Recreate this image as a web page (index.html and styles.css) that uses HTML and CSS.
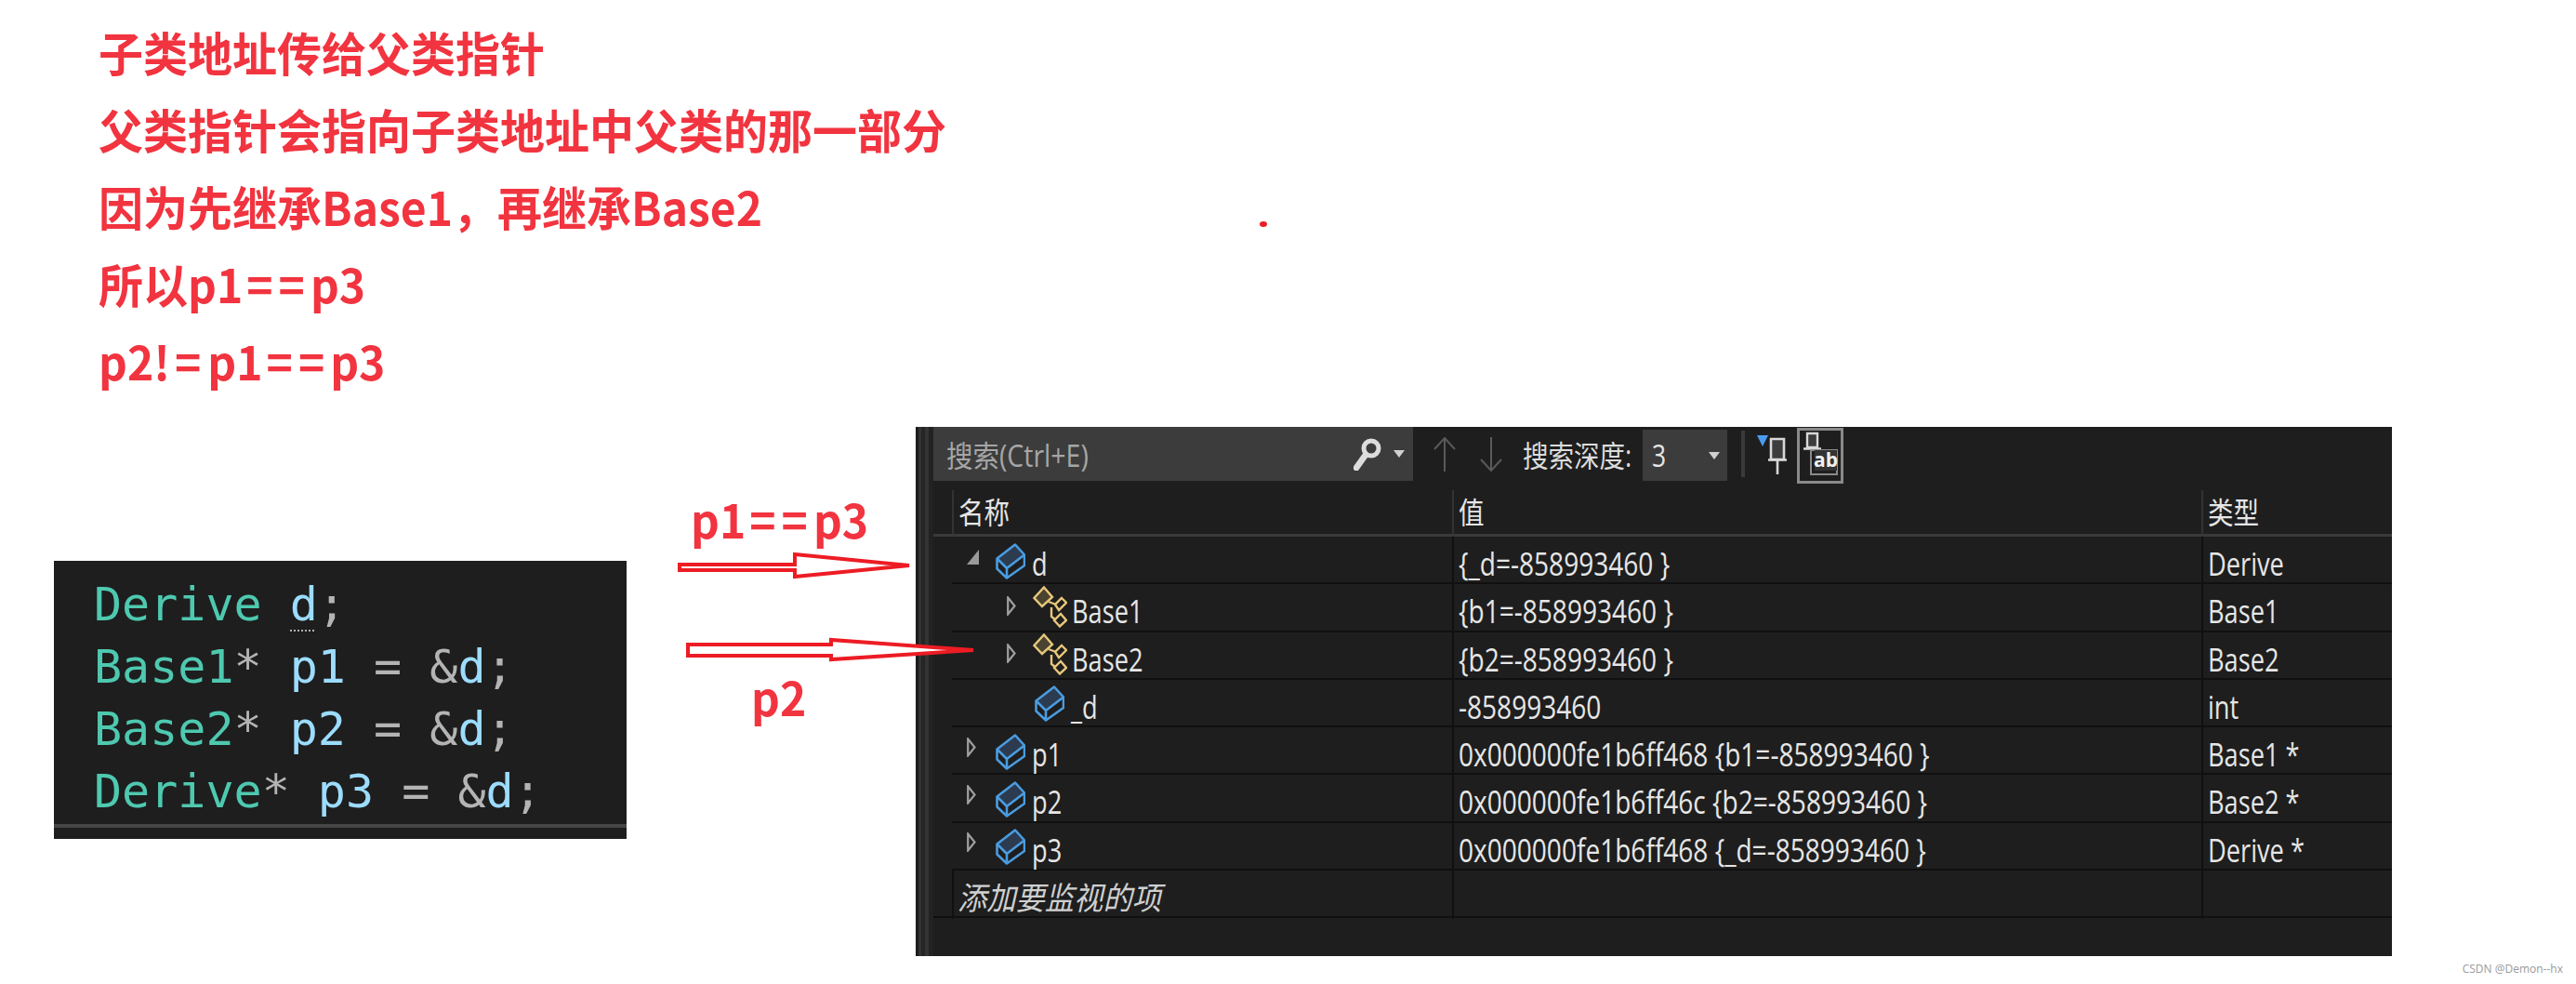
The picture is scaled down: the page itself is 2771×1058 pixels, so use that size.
FILE: index.html
```html
<!DOCTYPE html>
<html lang="zh-CN">
<head>
    <meta charset="UTF-8">
    <meta name="viewport" content="width=device-width, initial-scale=1.0">
    <title>子类地址传给父类指针</title>
    <link rel="stylesheet" href="styles.css">
</head>
<body>
    <svg class="defs" width="0" height="0">
        <symbol id="box" viewBox="0 0 32 39">
            <path d="M21 1.5 L31 12.5 L12 27 L1.5 16.5 Z" fill="#2c3b50"/>
            <path d="M21 1.5 L31 12.5 V24 L12 37.5 L1.5 27.5 V16.5 Z M1.5 16.5 L12 27 L31 12.5 M12 27 V37.5" fill="none" stroke="#4a9ce0" stroke-width="2.6" stroke-linejoin="round"/>
        </symbol>
        <symbol id="base" viewBox="0 0 37 45">
            <path d="M17 17 L25 20 M20 23 V33 L24 36" fill="none" stroke="#e8c77b" stroke-width="2.4"/>
            <path d="M12 1.5 L21 12 L10 22 L1.5 13 Z" fill="#49432f" stroke="#e8c77b" stroke-width="2.4"/>
            <path d="M31 13 L36 18 L28 26 L24 20 Z" fill="#1e1e1e" stroke="#e8c77b" stroke-width="2.4"/>
            <path d="M30 30 L36 37 L29 43.5 L23 37 Z" fill="#1e1e1e" stroke="#e8c77b" stroke-width="2.4"/>
        </symbol>
        <symbol id="closed" viewBox="0 0 10 21">
            <path d="M1.2 1.5 L8.5 10.5 L1.2 19.5 Z" fill="none" stroke="#a0a0a0" stroke-width="2.2"/>
        </symbol>
        <symbol id="open" viewBox="0 0 13 16">
            <path d="M13 0 V16 H0 Z" fill="#9a9a9a"/>
        </symbol>
    </svg>

    <div class="notes">
        <p>子类地址传给父类指针</p>
        <p>父类指针会指向子类地址中父类的那一部分</p>
        <p>因为先继承Base1，再继承Base2</p>
        <p>所以p1<span class="eq">==</span>p3</p>
        <p>p2!<span class="eq eq-wide">=</span>p1<span class="eq">==</span>p3</p>
    </div>
    <div class="dot"></div>

    <div class="lower">
        <div class="code">
            <div class="code-line"><span class="type">Derive</span> <span class="var dotted">d</span><span class="op">;</span></div>
            <div class="code-line"><span class="type">Base1</span><span class="op">*</span> <span class="var">p1</span> <span class="op">=</span> <span class="op">&amp;</span><span class="var">d</span><span class="op">;</span></div>
            <div class="code-line"><span class="type">Base2</span><span class="op">*</span> <span class="var">p2</span> <span class="op">=</span> <span class="op">&amp;</span><span class="var">d</span><span class="op">;</span></div>
            <div class="code-line"><span class="type">Derive</span><span class="op">*</span> <span class="var">p3</span> <span class="op">=</span> <span class="op">&amp;</span><span class="var">d</span><span class="op">;</span></div>
            <div class="code-rule"></div>
        </div>

        <div class="marks">
            <div class="mark mark-one">p1<span class="eq">==</span>p3</div>
            <div class="mark mark-two">p2</div>
        </div>

        <div class="panel">
            <div class="gutter"></div>
            <div class="watch">
                <div class="toolbar">
                    <div class="search">
                        <span class="squeeze">搜索(Ctrl+E)</span>
                        <svg class="search-icon" width="30" height="35" viewBox="0 0 30 35">
                            <circle cx="19" cy="11" r="8" fill="none" stroke="#dcdcdc" stroke-width="5"/>
                            <path d="M13 18 L3 32" stroke="#dcdcdc" stroke-width="6.5" stroke-linecap="round"/>
                        </svg>
                        <span class="caret caret-search"></span>
                    </div>
                    <svg class="step step-up" width="24" height="37" viewBox="0 0 24 37">
                        <path d="M12 37 V1 M1 13 L12 1 L23 13" fill="none" stroke="#5a5a5a" stroke-width="2"/>
                    </svg>
                    <svg class="step step-down" width="24" height="37" viewBox="0 0 24 37">
                        <path d="M12 0 V36 M1 24 L12 36 L23 24" fill="none" stroke="#5a5a5a" stroke-width="2"/>
                    </svg>
                    <span class="depth-label"><span class="squeeze">搜索深度:</span></span>
                    <div class="depth">
                        <span class="squeeze">3</span>
                        <span class="caret caret-depth"></span>
                    </div>
                    <div class="tool-sep"></div>
                    <svg class="pin" width="34" height="44" viewBox="0 0 34 44">
                        <path d="M0 2 H12 L6 14 Z" fill="#4a9cf0"/>
                        <path d="M15 6 H29 V28 H15 Z" fill="#3c3c3c" stroke="#d8d8d8" stroke-width="2.6"/>
                        <path d="M12 28.5 H32 M22 28 V44" stroke="#d8d8d8" stroke-width="2.6"/>
                    </svg>
                    <div class="toggle">
                        <svg width="44" height="54" viewBox="0 0 44 54">
                            <path d="M8 3 H19 V18 H8 Z" fill="#3c3c3c" stroke="#d8d8d8" stroke-width="2.4"/>
                            <path d="M4 19.5 H23 M13 19 V32" stroke="#d8d8d8" stroke-width="2.4"/>
                            <path d="M12 21 H40 V47 H12 Z" fill="#1e1e1e" stroke="#8a8a8a" stroke-width="2"/>
                            <rect x="16" y="21" width="24" height="22" fill="#333333"/>
                            <text class="ab" x="28" y="39" text-anchor="middle">ab</text>
                        </svg>
                    </div>
                </div>

                <div class="head">
                    <div class="head-cell"><span class="squeeze">名称</span></div>
                    <div class="head-cell"><span class="squeeze">值</span></div>
                    <div class="head-cell"><span class="squeeze">类型</span></div>
                </div>

                <div class="rows">
                    <div class="row">
                        <div class="cell name lvl0">
                            <svg class="exp exp-open" width="13" height="16"><use href="#open"/></svg>
                            <svg class="ico" width="32" height="39"><use href="#box"/></svg>
                            <span class="squeeze">d</span>
                        </div>
                        <div class="cell value"><span class="squeeze">{_d=-858993460 }</span></div>
                        <div class="cell"><span class="squeeze">Derive</span></div>
                    </div>
                    <div class="row">
                        <div class="cell name lvl1">
                            <svg class="exp exp-closed" width="10" height="21"><use href="#closed"/></svg>
                            <svg class="ico-base" width="37" height="45"><use href="#base"/></svg>
                            <span class="squeeze">Base1</span>
                        </div>
                        <div class="cell value"><span class="squeeze">{b1=-858993460 }</span></div>
                        <div class="cell"><span class="squeeze">Base1</span></div>
                    </div>
                    <div class="row">
                        <div class="cell name lvl1">
                            <svg class="exp exp-closed" width="10" height="21"><use href="#closed"/></svg>
                            <svg class="ico-base" width="37" height="45"><use href="#base"/></svg>
                            <span class="squeeze">Base2</span>
                        </div>
                        <div class="cell value"><span class="squeeze">{b2=-858993460 }</span></div>
                        <div class="cell"><span class="squeeze">Base2</span></div>
                    </div>
                    <div class="row">
                        <div class="cell name lvl2">
                            <svg class="ico" width="32" height="39"><use href="#box"/></svg>
                            <span class="squeeze">_d</span>
                        </div>
                        <div class="cell value"><span class="squeeze">-858993460</span></div>
                        <div class="cell"><span class="squeeze">int</span></div>
                    </div>
                    <div class="row">
                        <div class="cell name lvl0">
                            <svg class="exp exp-top" width="10" height="21"><use href="#closed"/></svg>
                            <svg class="ico" width="32" height="39"><use href="#box"/></svg>
                            <span class="squeeze">p1</span>
                        </div>
                        <div class="cell value"><span class="squeeze">0x000000fe1b6ff468 {b1=-858993460 }</span></div>
                        <div class="cell"><span class="squeeze">Base1 *</span></div>
                    </div>
                    <div class="row">
                        <div class="cell name lvl0">
                            <svg class="exp exp-top" width="10" height="21"><use href="#closed"/></svg>
                            <svg class="ico" width="32" height="39"><use href="#box"/></svg>
                            <span class="squeeze">p2</span>
                        </div>
                        <div class="cell value"><span class="squeeze">0x000000fe1b6ff46c {b2=-858993460 }</span></div>
                        <div class="cell"><span class="squeeze">Base2 *</span></div>
                    </div>
                    <div class="row">
                        <div class="cell name lvl0">
                            <svg class="exp exp-top" width="10" height="21"><use href="#closed"/></svg>
                            <svg class="ico" width="32" height="39"><use href="#box"/></svg>
                            <span class="squeeze">p3</span>
                        </div>
                        <div class="cell value"><span class="squeeze">0x000000fe1b6ff468 {_d=-858993460 }</span></div>
                        <div class="cell"><span class="squeeze">Derive *</span></div>
                    </div>
                    <div class="row row-add">
                        <div class="cell add"><span class="squeeze">添加要监视的项</span></div>
                        <div class="cell"></div>
                        <div class="cell"></div>
                    </div>
                </div>
            </div>
        </div>
    </div>

    <!-- arrows drawn over the panel edge -->
    <svg class="arrows" width="340" height="130" viewBox="0 0 340 130">
        <path d="M2 13 H126 V2 L249 14 L126 26 V19 H2 Z" fill="#fff" stroke="#ed1c24" stroke-width="4"/>
        <path d="M11 99 H165 V94 L318 105 L165 115 V111 H11 Z" fill="#fff" stroke="#ed1c24" stroke-width="4"/>
    </svg>

    <div class="watermark">CSDN @Demon--hx</div>
</body>
</html>
```

FILE: styles.css
```css
:root {
    --red: #f1343f;
    --panel-bg: #1e1e1e;
    --box-bg: #3c3c3c;
    --cell-line: #101010;
    --teal: #4ec9b0;
    --sky: #9cdcfe;
    --grey: #b4b4b4;
}

body {
    margin: 0;
    width: 2771px;
    height: 1058px;
    position: relative;
    overflow: hidden;
    background-color: #fff;
    font-family: "Noto Sans CJK SC", sans-serif;
}

.defs {
    position: absolute;
}

.notes {
    height: 459px;
    box-sizing: border-box;
    padding: 14px 0 0 106px;
    color: var(--red);
    font-size: 48px;
    font-weight: 700;
    line-height: 83px;
}

.notes p {
    margin: 0;
    transform: scaleY(1.05);
}

.eq {
    letter-spacing: 6px;
    margin-left: 4px;
}

.eq-wide {
    margin-right: 1px;
    margin-left: 5px;
}

.dot {
    position: absolute;
    left: 1355px;
    top: 238px;
    width: 8px;
    height: 6px;
    border-radius: 50%;
    background-color: #ed1c24;
}

.lower {
    display: flex;
    align-items: flex-start;
}

/* code snippet */
.code {
    width: 616px;
    height: 299px;
    margin: 144px 0 0 58px;
    padding-top: 14px;
    box-sizing: border-box;
    background-color: #1e1e1e;
    font-family: "DejaVu Sans Mono", monospace;
    font-size: 50px;
    line-height: 67px;
}

.code-line {
    padding-left: 43px;
    white-space: pre;
}

.code-rule {
    height: 4px;
    margin-top: 1px;
    background-color: #454545;
}

.type { color: var(--teal); }
.var { color: var(--sky); }
.op { color: var(--grey); }

.dotted {
    position: relative;
}

.dotted::after {
    content: "";
    position: absolute;
    left: 0;
    right: 4px;
    bottom: 0;
    border-bottom: 2px dotted #b0b0b0;
}

/* red labels next to the panel */
.marks {
    width: 311px;
    color: var(--red);
    font-size: 48px;
    font-weight: 700;
    line-height: 60px;
}

.mark {
    transform: scaleY(1.05);
}

.mark-one {
    margin: 68px 0 0 69px;
}

.mark-two {
    margin: 131px 0 0 134px;
}

.arrows {
    position: absolute;
    left: 729px;
    top: 594px;
}

/* watch window */
.panel {
    width: 1588px;
    height: 569px;
    display: flex;
    background-color: var(--panel-bg);
    color: #e6e6e6;
    font-family: "Open Sans", "Noto Sans CJK SC", sans-serif;
    font-size: 34px;
}

.gutter {
    width: 19px;
    flex: none;
    background-image: linear-gradient(to right,
        #1c1c1c 0 3px, #333 3px 6px, #252525 6px 10px, #333 10px 14px, #222 14px 19px);
}

.watch {
    flex: 1;
    display: flex;
    flex-direction: column;
    min-width: 0;
}

.squeeze {
    display: inline-block;
    white-space: nowrap;
    transform: scaleX(0.8);
    transform-origin: left center;
}

.value .squeeze {
    transform: scaleX(0.825);
}

.toolbar {
    height: 58px;
    flex: none;
    display: flex;
    align-items: center;
}

.search {
    width: 516px;
    height: 58px;
    box-sizing: border-box;
    padding-left: 14px;
    flex: none;
    display: flex;
    align-items: center;
    background-color: var(--box-bg);
    color: #a6a6a6;
    font-size: 32px;
}

.search .squeeze {
    transform: scaleX(0.89);
    flex: 1;
}

.search-icon {
    flex: none;
    margin-right: 13px;
}

.caret {
    display: block;
    flex: none;
    width: 0;
    height: 0;
    border-left: 6px solid transparent;
    border-right: 6px solid transparent;
    border-top: 8px solid #d0d0d0;
}

.caret-search {
    margin-right: 9px;
}

.step {
    flex: none;
}

.step-up {
    margin-left: 22px;
}

.step-down {
    margin-left: 26px;
}

.depth-label {
    width: 129px;
    margin-left: 22px;
    flex: none;
    font-size: 32px;
    color: #dcdcdc;
}

.depth-label .squeeze {
    transform: scaleX(0.86);
}

.depth {
    width: 91px;
    height: 55px;
    align-self: flex-end;
    flex: none;
    box-sizing: border-box;
    padding: 0 8px 0 10px;
    display: flex;
    align-items: center;
    justify-content: space-between;
    background-color: var(--box-bg);
    font-size: 33px;
}

.tool-sep {
    width: 4px;
    height: 50px;
    margin-left: 15px;
    flex: none;
    background-color: #3a3a3a;
}

.pin {
    flex: none;
    margin-left: 13px;
}

.toggle {
    width: 50px;
    height: 60px;
    margin: 1px 0 0 9px;
    align-self: flex-start;
    flex: none;
    box-sizing: border-box;
    border: 3px solid #8a8a8a;
    background-color: #1e1e1e;
}

.toggle svg {
    display: block;
}

.ab {
    fill: #f0f0f0;
    font-family: "Open Sans", sans-serif;
    font-size: 21px;
    font-weight: 700;
}

.head {
    height: 60px;
    flex: none;
    box-sizing: border-box;
    padding-left: 20px;
    display: grid;
    grid-template-columns: 538px 806px 1fr;
    border-bottom: 3px solid #3a3a3a;
    font-size: 32px;
}

.head .squeeze {
    transform: scaleX(0.86);
}

.head-cell {
    margin-top: 10px;
    padding-left: 5px;
    border-left: 2px solid #333;
    line-height: 48px;
}

.rows {
    margin-left: 20px;
}

.row {
    height: 51.25px;
    box-sizing: border-box;
    display: grid;
    grid-template-columns: 538px 806px 1fr;
    border-bottom: 2px solid var(--cell-line);
}

.row-add {
    margin-left: -20px;
    padding-left: 20px;
}

.cell {
    display: flex;
    align-items: center;
    box-sizing: border-box;
    padding-left: 5px;
    border-left: 2px solid var(--cell-line);
    white-space: nowrap;
    line-height: 46px;
}

.cell .squeeze {
    margin-top: 6px;
}

.name {
    border-left: none;
}

.lvl0 { padding-left: 16px; }
.lvl1 { padding-left: 59px; }
.lvl2 { padding-left: 89px; }

.exp {
    flex: none;
}

.exp-open {
    margin-right: 18px;
    margin-top: -8px;
}

.exp-top {
    margin-right: 21px;
    margin-top: -10px;
}

.exp-closed {
    margin-right: 18px;
    margin-top: -6px;
}

.ico {
    flex: none;
    margin-right: 7px;
}

.ico-base {
    flex: none;
    margin-right: 5px;
    margin-top: -4px;
}

.add {
    padding-left: 4px;
    font-style: italic;
    font-size: 34px;
    color: #cfcfcf;
}

.add .squeeze {
    transform: scaleX(0.92);
}

.watermark {
    position: absolute;
    right: 14px;
    bottom: 9px;
    color: #9a9a9a;
    font-family: "Open Sans", sans-serif;
    font-size: 12px;
    line-height: 14px;
}
```
